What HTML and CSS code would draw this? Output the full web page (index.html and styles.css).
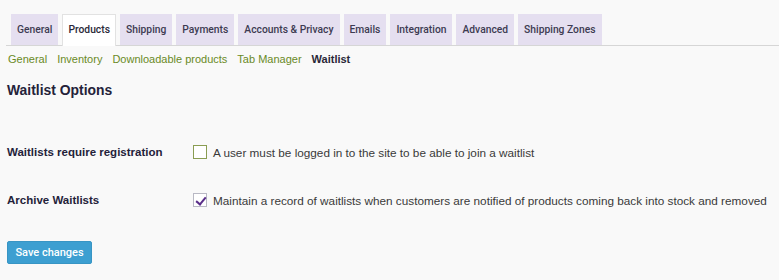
FILE: index.html
```html
<!DOCTYPE html>
<html>
  <head>
    <title>Waitlist Settings</title>
    <link rel="stylesheet" href="styles.css">
  </head>
  <body>
    <div class="wrap">
      <nav class="nav-tabs">
        <a class="nav-tab">General</a>
        <a class="nav-tab nav-tab-active">Products</a>
        <a class="nav-tab">Shipping</a>
        <a class="nav-tab">Payments</a>
        <a class="nav-tab">Accounts &amp; Privacy</a>
        <a class="nav-tab">Emails</a>
        <a class="nav-tab">Integration</a>
        <a class="nav-tab">Advanced</a>
        <a class="nav-tab">Shipping Zones</a>
      </nav>
      <ul class="subsubsub">
        <li><a>General</a></li>
        <li><a>Inventory</a></li>
        <li><a>Downloadable products</a></li>
        <li><a>Tab Manager</a></li>
        <li><a class="current">Waitlist</a></li>
      </ul>
      <h2 class="section-title">Waitlist Options</h2>
      <div class="form-table">
        <div class="form-row">
          <div class="row-label">Waitlists require registration</div>
          <label class="row-field">
            <input type="checkbox" />
            A user must be logged in to the site to be able to join a waitlist
          </label>
        </div>
        <div class="form-row">
          <div class="row-label">Archive Waitlists</div>
          <label class="row-field">
            <input type="checkbox" checked />
            Maintain a record of waitlists when customers are notified of products coming back into stock and removed
          </label>
        </div>
      </div>
      <button class="button-primary">Save changes</button>
    </div>
  </body>
</html>
```

FILE: styles.css
```css
body {
  margin: 0;
  background: #f9f9f9;
  font-family: "Liberation Sans", Arial, sans-serif;
  font-size: 11px;
  color: #2f2d3d;
}

.wrap {
  padding: 0 0 0 7px;
}

.nav-tabs {
  display: flex;
  gap: 4px;
  padding: 14px 0 0 4px;
  margin-left: -1px;
  border-bottom: 1px solid #d6d6d6;
}

.nav-tab {
  display: block;
  padding: 8px 5px 0;
  height: 22px;
  background: #e5dff0;
  border: 1px solid #e5dff0;
  border-bottom: none;
  font-family: Roboto, "Liberation Sans", sans-serif;
  font-weight: 500;
  font-size: 10.3px;
  color: #3d3b52;
  margin-bottom: -1px;
}

.nav-tab:first-child {
  margin-left: 1px;
}

.nav-tab-active {
  background: #fff;
  border-color: #e2e2e2;
  height: 23px;
  color: #2a2838;
}

.subsubsub {
  list-style: none;
  display: flex;
  gap: 10px;
  margin: 0;
  padding: 6px 0 0 1px;
  font-size: 11px;
  line-height: 14px;
}

.subsubsub a {
  color: #6a8a26;
}

.subsubsub a.current {
  color: #2a2838;
  font-weight: bold;
}

.section-title {
  margin: 0;
  padding: 15px 0 0 0;
  font-size: 13.9px;
  line-height: 18px;
  color: #24223a;
}

.form-table {
  padding-top: 29px;
}

.form-row {
  display: flex;
  align-items: center;
  height: 48px;
}

.row-label {
  width: 186px;
  font-weight: bold;
  font-size: 11.5px;
  color: #24223a;
}

.row-field {
  display: flex;
  align-items: center;
  gap: 6px;
  font-size: 11.75px;
  color: #3a3a3a;
}

.row-field input {
  appearance: none;
  margin: 0;
  width: 14px;
  height: 14px;
  border: 1px solid #8a9d52;
  background: #fff;
  position: relative;
}

.row-field input:checked {
  border-color: #b9b9c4;
}

.row-field input:checked::after {
  content: "";
  position: absolute;
  left: 4px;
  top: 1px;
  width: 4px;
  height: 8px;
  border: solid #5a2e8a;
  border-width: 0 2px 2px 0;
  transform: rotate(40deg);
}

.button-primary {
  margin-top: 17px;
  background: #3d9fd1;
  border: 1px solid #3895c4;
  border-radius: 2px;
  color: #fff;
  font-family: Roboto, "Liberation Sans", sans-serif;
  font-weight: 500;
  font-size: 11px;
  height: 23px;
  width: 85px;
  padding: 0;
}
```
